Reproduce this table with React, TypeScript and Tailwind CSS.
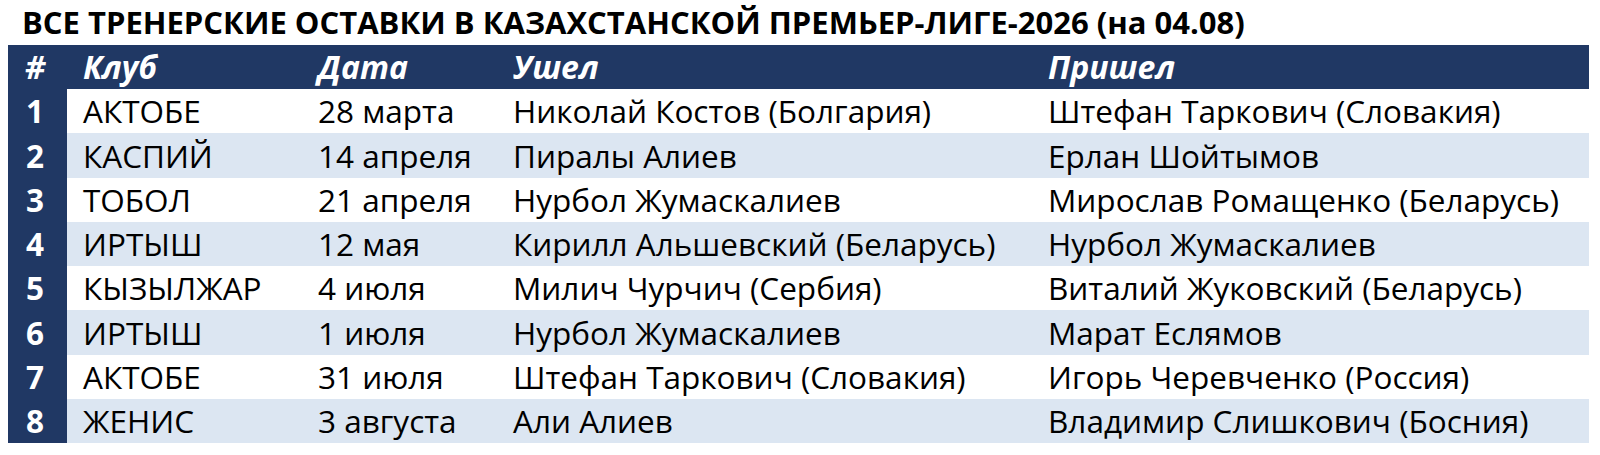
import React from "react";

const rows: [string, string, string, string, string][] = [
  ["1", "АКТОБЕ", "28 марта", "Николай Костов (Болгария)", "Штефан Таркович (Словакия)"],
  ["2", "КАСПИЙ", "14 апреля", "Пиралы Алиев", "Ерлан Шойтымов"],
  ["3", "ТОБОЛ", "21 апреля", "Нурбол Жумаскалиев", "Мирослав Ромащенко (Беларусь)"],
  ["4", "ИРТЫШ", "12 мая", "Кирилл Альшевский (Беларусь)", "Нурбол Жумаскалиев"],
  ["5", "КЫЗЫЛЖАР", "4 июля", "Милич Чурчич (Сербия)", "Виталий Жуковский (Беларусь)"],
  ["6", "ИРТЫШ", "1 июля", "Нурбол Жумаскалиев", "Марат Еслямов"],
  ["7", "АКТОБЕ", "31 июля", "Штефан Таркович (Словакия)", "Игорь Черевченко (Россия)"],
  ["8", "ЖЕНИС", "3 августа", "Али Алиев", "Владимир Слишкович (Босния)"],
];

export default function App() {
  return (
    <div className="w-[1600px] h-[455px] bg-white font-['Open_Sans',sans-serif] text-black">
      <div className="h-[45px] pl-[22px] flex items-center text-[31px] font-bold leading-none whitespace-nowrap">
        ВСЕ ТРЕНЕРСКИЕ ОСТАВКИ В КАЗАХСТАНСКОЙ ПРЕМЬЕР-ЛИГЕ-2026 (на 04.08)
      </div>
      <div className="ml-[8px] w-[1581px]">
        <div className="grid grid-cols-[59px_235px_195px_535px_1fr] h-[44px] bg-[#203864] text-white font-bold italic text-[32px] items-center leading-none">
          <div className="pl-[17px]">#</div>
          <div className="pl-[16px]">Клуб</div>
          <div className="pl-[16px]">Дата</div>
          <div className="pl-[16px]">Ушел</div>
          <div className="pl-[16px]">Пришел</div>
        </div>
        {rows.map((r, i) => (
          <div
            key={r[0]}
            className={`grid grid-cols-[59px_235px_195px_535px_1fr] h-[44.25px] items-stretch text-[31.5px] leading-none ${
              i % 2 === 1 ? "bg-[#dce6f2]" : "bg-white"
            }`}
          >
            <div className="bg-[#203864] text-white font-bold pl-[18px] flex items-center">{r[0]}</div>
            <div className="pl-[16px] flex items-center whitespace-nowrap">{r[1]}</div>
            <div className="pl-[16px] flex items-center whitespace-nowrap">{r[2]}</div>
            <div className="pl-[16px] flex items-center whitespace-nowrap">{r[3]}</div>
            <div className="pl-[16px] flex items-center whitespace-nowrap">{r[4]}</div>
          </div>
        ))}
      </div>
    </div>
  );
}
